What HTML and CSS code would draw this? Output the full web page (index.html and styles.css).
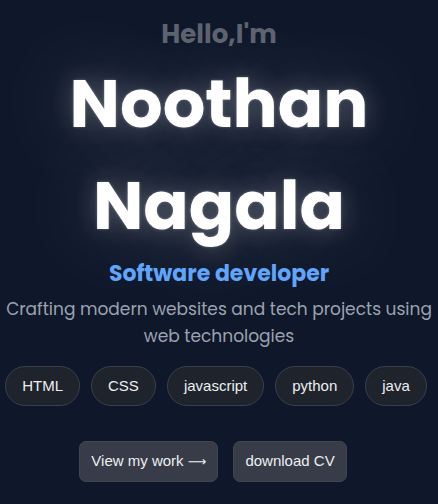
FILE: index.html
```html
<!DOCTYPE html>
<html lang="en">
<head>
<meta charset="utf-8">
<title>Noothan Nagala</title>
<link rel="stylesheet" href="styles.css">
</head>
<body>
<main class="hero">
  <p class="hello">Hello,I'm</p>
  <h1 class="name">Noothan<br>Nagala</h1>
  <h2 class="role">Software developer</h2>
  <p class="desc">Crafting modern websites and tech projects using web technologies</p>
  <ul class="skills">
    <li class="pill">HTML</li>
    <li class="pill">CSS</li>
    <li class="pill">javascript</li>
    <li class="pill">python</li>
    <li class="pill">java</li>
  </ul>
  <div class="actions">
    <a class="btn" href="#work">View my work <span class="arrow">&#x27F6;</span></a>
    <a class="btn" href="#cv">download CV</a>
  </div>
</main>
</body>
</html>
```
FILE: styles.css
```css
html, body {
  margin: 0;
  padding: 0;
}
body {
  background: #0f172a;
  min-height: 504px;
  font-family: "Poppins", "Open Sans", "Noto Sans", sans-serif;
  color: #fff;
  overflow: hidden;
}
.hero {
  display: flex;
  flex-direction: column;
  align-items: center;
  text-align: center;
  padding: 18px 0 0;
}
.hello {
  margin: 0;
  font-size: 26px;
  line-height: 32px;
  font-weight: 700;
  color: #5d626f;
}
.name {
  margin: 3px 0 0;
  font-size: 67px;
  line-height: 102px;
  font-weight: 700;
  color: #ffffff;
  text-shadow: 0 0 3px rgba(255,255,255,0.3), 0 0 24px rgba(255,255,255,0.25), 0 0 90px rgba(255,255,255,0.3);
}
.role {
  margin: 1px 0 0;
  font-size: 22px;
  line-height: 32px;
  font-weight: 700;
  color: #60a5fa;
}
.desc {
  margin: 6px 0 0;
  font-size: 17px;
  line-height: 27px;
  color: #9ca3af;
  max-width: 432px;
}
.skills {
  list-style: none;
  margin: 16px 6px 0 0;
  padding: 0;
  display: flex;
  flex-wrap: wrap;
  justify-content: center;
  gap: 11px;
}
.pill {
  font-family: "Liberation Sans", Arial, sans-serif;
  font-size: 15px;
  line-height: 18px;
  padding: 10px 16px;
  border: 1px solid #3b3f4a;
  border-radius: 999px;
  background: #1f232c;
  color: #eceef2;
}
.actions {
  display: flex;
  gap: 15px;
  margin: 35px 12px 0 0;
}
.btn {
  font-family: "Liberation Sans", Arial, sans-serif;
  font-size: 15px;
  line-height: 18px;
  padding: 10px 11px;
  border-radius: 7px;
  background: #383c48;
  border: 1px solid #41454f;
  color: #eceef2;
  text-decoration: none;
}
.arrow {
  font-family: "DejaVu Sans", sans-serif;
  font-size: 13px;
}
```
